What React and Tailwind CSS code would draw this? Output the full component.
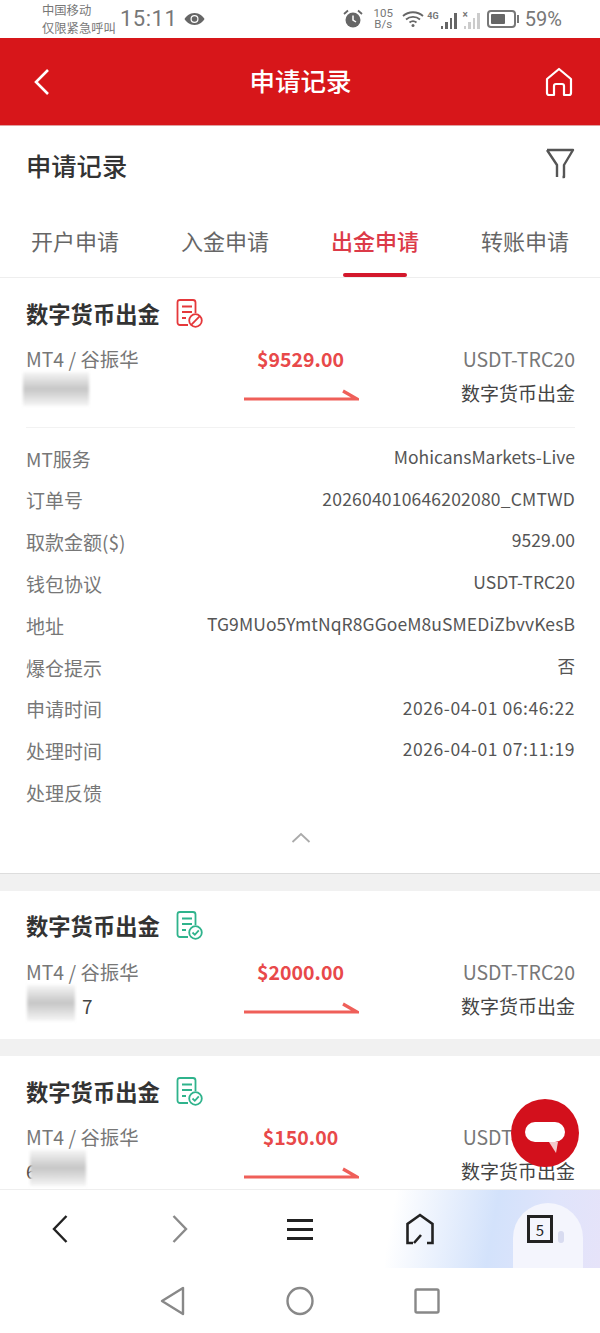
const sans = "font-['Noto_Sans_CJK_SC','Noto_Sans',sans-serif]";

const details = [
  ["MT服务", "MohicansMarkets-Live", ""],
  ["订单号", "202604010646202080_CMTWD", "tracking-[0.2px]"],
  ["取款金额($)", "9529.00", ""],
  ["钱包协议", "USDT-TRC20", "tracking-[0.1px]"],
  ["地址", "TG9MUo5YmtNqR8GGoeM8uSMEDiZbvvKesB", "tracking-[0.08px]"],
  ["爆仓提示", "否", ""],
  ["申请时间", "2026-04-01 06:46:22", "tracking-[0.55px]"],
  ["处理时间", "2026-04-01 07:11:19", "tracking-[0.55px]"],
  ["处理反馈", "", ""],
];

const tabs = ["开户申请", "入金申请", "出金申请", "转账申请"];

const DocIcon = ({ ok }) => {
  const color = ok ? "#2fb38c" : "#e5383b";
  return (
    <svg width="27" height="30" viewBox="0 0 27 30" fill="none" stroke={color} strokeWidth="1.8">
      <path d="M12 27H4a2.500 2.500 0 0 1-2.500-2.500v-20A2.500 2.500 0 0 1 4 2h13a2.500 2.500 0 0 1 2.500 2.500V15" />
      <path d="M6 8.500h10M6 14h10M6 20h4" />
      <circle cx="19.500" cy="22.500" r="6.300" fill="#fff" />
      {ok ? <path d="M16.500 22.500l2.300 2.300 4-4.500" /> : <path d="M15.200 26.800l8.600-8.600" />}
    </svg>
  );
};

const ArrowLine = () => (
  <svg width="116" height="14" viewBox="0 0 116 14" fill="none" stroke="#ef5f59" strokeWidth="3.200">
    <path d="M1 11h113L100 3" />
  </svg>
);

const Blur = ({ className }) => (
  <div className={"absolute blur-[1.5px] " + className}>
    <div className="h-full w-full bg-gradient-to-b from-[#f6f6f6] via-[#c6c6c6] to-[#f6f6f6]"></div>
  </div>
);

const Summary = ({ amount, tail, tailClass, blurClass }) => (
  <div className="grid grid-cols-3 items-start">
    <div className="relative">
      <div className="text-[19.400px] leading-[28px] text-[#777]">MT4 / 谷振华</div>
      <div className={"mt-[6px] h-[28px] text-[19px] leading-[28px] text-[#444] " + tailClass}>{tail}</div>
      <Blur className={blurClass} />
    </div>
    <div className="flex flex-col items-center">
      <div className="text-[19.500px] font-bold leading-[28px] text-[#e8494a]">{amount}</div>
      <div className="mt-[15px]">
        <ArrowLine />
      </div>
    </div>
    <div className="text-right">
      <div className="text-[19.500px] leading-[28px] text-[#777]">USDT-TRC20</div>
      <div className="mt-[6px] text-[19px] leading-[28px] text-[#444]">数字货币出金</div>
    </div>
  </div>
);

const CardTitle = ({ ok }) => (
  <div className="flex items-center gap-[16px]">
    <span className="text-[22.300px] font-bold leading-[30px] text-[#333]">数字货币出金</span>
    <DocIcon ok={ok} />
  </div>
);

export default function App() {
  return (
    <div className={"relative flex h-[1333px] w-[600px] flex-col overflow-hidden bg-white " + sans}>
      {/* status bar */}
      <div className="flex h-[38px] shrink-0 items-center pl-[42px] pr-[38px] font-['Roboto',sans-serif] text-[#777]">
        <div className="w-[78px] font-['Noto_Sans_CJK_SC',sans-serif] text-[12.300px] leading-[18px]">
          <div>中国移动</div>
          <div className="whitespace-nowrap">仅限紧急呼叫</div>
        </div>
        <span className="text-[22px] leading-none tracking-[0.5px]">15:11</span>
        <svg className="ml-[7px]" width="21" height="14" viewBox="0 0 21 14">
          <path d="M10.500 1C5.500 1 2 4.500.5 7c1.500 2.500 5 6 10 6s8.500-3.500 10-6c-1.500-2.500-5-6-10-6z" fill="#666" />
          <circle cx="10.500" cy="7" r="4" fill="#fff" />
          <circle cx="10.500" cy="7" r="2.800" fill="#666" />
        </svg>
        <div className="flex-1"></div>
        <svg width="20" height="20" viewBox="0 0 20 20" fill="#666">
          <circle cx="10" cy="11" r="7.500" />
          <path d="M1 5l4-3.500M19 5l-4-3.500" stroke="#666" strokeWidth="1.800" />
          <path d="M10 6.500v4.500l3 2" stroke="#fff" strokeWidth="1.500" fill="none" />
        </svg>
        <div className="ml-[10px] w-[20px] text-center text-[11.500px] leading-[11.500px]">
          <div>105</div>
          <div>B/s</div>
        </div>
        <svg className="ml-[9px]" width="22" height="18" viewBox="0 0 22 18" fill="none" stroke="#666" strokeWidth="1.800">
          <path d="M1 6c5.500-5 14.500-5 20 0M4 9.500c4-3.500 10-3.500 14 0M7.500 12.500c2-1.500 5-1.500 7 0" />
          <circle cx="11" cy="15.500" r="1.500" fill="#666" stroke="none" />
        </svg>
        <div className="ml-[3px] flex h-[20px] items-end gap-[2px]">
          <span className="mb-[8px] mr-[0px] text-[9px] font-bold leading-none">4G</span>
          <i className="h-[3px] w-[2.500px] bg-[#666]"></i>
          <i className="h-[7px] w-[2.500px] bg-[#666]"></i>
          <i className="h-[11px] w-[2.500px] bg-[#666]"></i>
          <i className="h-[16px] w-[2.500px] bg-[#666]"></i>
        </div>
        <div className="ml-[6px] flex h-[20px] items-end gap-[2px]">
          <span className="mb-[9px] mr-[-6px] text-[10px] font-bold leading-none">×</span>
          <i className="h-[3px] w-[2.500px] bg-[#ccc]"></i>
          <i className="h-[7px] w-[2.500px] bg-[#ccc]"></i>
          <i className="h-[11px] w-[2.500px] bg-[#ccc]"></i>
          <i className="h-[16px] w-[2.500px] bg-[#ccc]"></i>
        </div>
        <div className="ml-[7px] flex items-center">
          <div className="flex h-[18px] w-[29px] items-center rounded-[4px] border-2 border-[#777] p-[2px]">
            <div className="h-full w-[14px] rounded-[1px] bg-[#666]"></div>
          </div>
          <div className="ml-[1px] h-[8px] w-[2px] bg-[#777]"></div>
        </div>
        <span className="ml-[6px] text-[20px] leading-none">59%</span>
      </div>

      {/* header */}
      <div className="grid h-[88px] shrink-0 grid-cols-[1fr_auto_1fr] items-center border-b border-[#e0a0a0] bg-[#d7161a] pl-[32px] pr-[27px] text-white">
        <svg width="20" height="30" viewBox="0 0 20 30" fill="none" stroke="#fff" strokeWidth="2.600">
          <path d="M16 3L4 15l12 12" />
        </svg>
        <span className="relative top-[-2px] left-[-2px] text-[25.500px] font-medium leading-none">申请记录</span>
        <svg className="justify-self-end" width="28" height="30" viewBox="0 0 28 30" fill="none" stroke="#fff" strokeWidth="2.200" strokeLinejoin="round">
          <path d="M2 12L14 2l12 10v14a2 2 0 0 1-2 2h-5v-9a2 2 0 0 0-2-2h-6a2 2 0 0 0-2 2v9H4a2 2 0 0 1-2-2z" />
        </svg>
      </div>

      {/* page body */}
      <div className="flex-1 overflow-hidden">
        <div className="flex h-[80px] items-start justify-between pl-[26px] pr-[25px] pt-[21px]">
          <span className="text-[25.300px] font-medium leading-[36px] text-[#333]">申请记录</span>
          <svg width="30" height="32" viewBox="0 0 30 32" fill="none" stroke="#555" strokeWidth="2.400" strokeLinejoin="round">
            <path d="M2 3h26l-9 15v12h-1.500M12 30V18L2 3" />
          </svg>
        </div>

        <div className="grid h-[72px] grid-cols-4 border-b border-[#eee]">
          {tabs.map((t) => (
            <div key={t} className="relative flex items-start justify-center pt-[18px]">
              <span className={"text-[22px] leading-[32px] " + (t === "出金申请" ? "font-medium text-[#dc3a48]" : "text-[#666]")}>
                {t}
              </span>
              {t === "出金申请" && (
                <div className="absolute bottom-0 h-[4px] w-[64px] rounded-full bg-[#d3182c]"></div>
              )}
            </div>
          ))}
        </div>

        {/* expanded card */}
        <div className="border-b border-[#ddd] pl-[26px] pr-[25px] pt-[20px]">
          <CardTitle ok={false} />
          <div className="mt-[17px] pb-[20px]">
            <Summary amount="$9529.00" tail="" tailClass="" blurClass="left-[-3px] top-[27px] h-[34px] w-[66px]" />
          </div>
          <div className="border-t border-[#f2f2f2] pt-[10px]">
            {details.map(([label, value, track]) => (
              <div key={label} className="flex h-[41.800px] items-center justify-between">
                <span className="text-[19px] text-[#777]">{label}</span>
                <span className={"relative top-[-2px] text-[17.500px] text-[#555] " + track}>{value}</span>
              </div>
            ))}
          </div>
          <div className="flex h-[59px] justify-center pt-[18px]">
            <svg width="20" height="12" viewBox="0 0 20 12" fill="none" stroke="#aaa" strokeWidth="1.800">
              <path d="M1.500 10L10 2l8.500 8" />
            </svg>
          </div>
        </div>

        <div className="h-[17px] bg-[#f1f1f1]"></div>

        <div className="h-[148px] pl-[26px] pr-[25px] pt-[19px]">
          <CardTitle ok />
          <div className="mt-[18px]">
            <Summary amount="$2000.00" tail="7" tailClass="pl-[56px]" blurClass="left-[1px] top-[27px] h-[36px] w-[48px]" />
          </div>
        </div>

        <div className="h-[17px] bg-[#f1f1f1]"></div>

        <div className="pl-[26px] pr-[25px] pt-[20px]">
          <CardTitle ok />
          <div className="mt-[17px]">
            <Summary amount="$150.00" tail="6" tailClass="" blurClass="left-[4px] top-[27px] h-[36px] w-[56px]" />
          </div>
        </div>
      </div>

      {/* floating chat button */}
      <div className="absolute left-[511px] top-[1099px] flex h-[68px] w-[68px] items-center justify-center rounded-full bg-[#d3101c]">
        <svg className="mt-[9px]" width="40" height="31" viewBox="0 0 40 31" fill="#fff">
          <rect x="0" y="0" width="40" height="20" rx="10" />
          <path d="M24 20h9l-2 11z" fill="#f3c9cb" />
        </svg>
      </div>

      {/* browser toolbar */}
      <div className="relative grid h-[79px] shrink-0 grid-cols-5 items-center border-t border-[#eee] bg-white">
        <div className="absolute inset-y-0 left-[385px] right-0 bg-[linear-gradient(100deg,#fff_5%,#d3e2fb_50%,#dfe4fb_75%,#e6e3f9_100%)]"></div>
        <div className="absolute bottom-0 left-[513px] h-[65px] w-[70px] rounded-t-[35px] bg-[#f4f5fd]"></div>
        <div className="absolute left-[558px] top-[41px] h-[12px] w-[6px] rounded-full bg-[#d8dbf0]"></div>
        <div className="relative flex justify-center">
          <svg width="16" height="30" viewBox="0 0 16 30" fill="none" stroke="#222" strokeWidth="2.400">
            <path d="M14.500 2L2 15l12.500 13" />
          </svg>
        </div>
        <div className="relative flex justify-center">
          <svg width="16" height="30" viewBox="0 0 16 30" fill="none" stroke="#8a8a8a" strokeWidth="2.400">
            <path d="M1.500 2L14 15 1.500 28" />
          </svg>
        </div>
        <div className="relative flex justify-center">
          <svg width="26" height="24" viewBox="0 0 26 24" fill="#222">
            <rect width="26" height="3" y="2" />
            <rect width="26" height="3" y="11" />
            <rect width="26" height="3" y="20" />
          </svg>
        </div>
        <div className="relative flex justify-center">
          <svg width="30" height="32" viewBox="0 0 30 32" fill="none" stroke="#222" strokeWidth="2.600">
            <path d="M8 30H2.500V11L15 2l12.500 9v19H22M9 30l7-8" />
          </svg>
        </div>
        <div className="relative flex justify-center">
          <div className="flex h-[28px] w-[26px] items-center justify-center border-[3px] border-[#222] text-[15px] leading-none text-[#222]">
            5
          </div>
        </div>
      </div>

      {/* android nav */}
      <div className="flex h-[65px] shrink-0 items-center justify-center gap-[100px]">
        <svg width="26" height="30" viewBox="0 0 26 30" fill="none" stroke="#888" strokeWidth="2.400" strokeLinejoin="round">
          <path d="M23 2v26L2 15z" />
        </svg>
        <svg width="28" height="30" viewBox="0 0 28 30" fill="none" stroke="#888" strokeWidth="2.400">
          <ellipse cx="14" cy="15" rx="12.500" ry="13" />
        </svg>
        <svg width="26" height="26" viewBox="0 0 26 26" fill="none" stroke="#888" strokeWidth="2.400">
          <rect x="1.500" y="1.500" width="23" height="23" rx="1.500" />
        </svg>
      </div>
    </div>
  );
}
